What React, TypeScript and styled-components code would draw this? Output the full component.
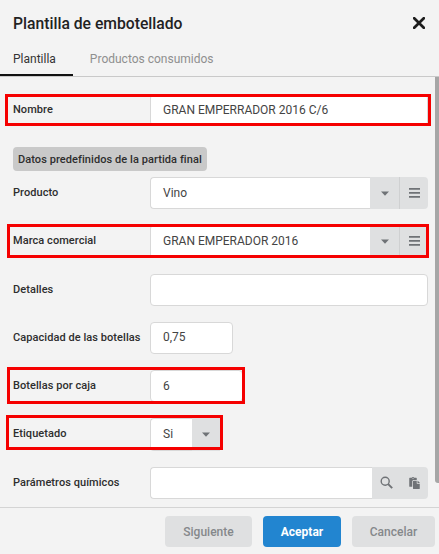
import React from "react";
import styled, { createGlobalStyle } from "styled-components";
import { FaPaste } from "react-icons/fa";

const Global = createGlobalStyle`
  html, body {
    margin: 0;
    padding: 0;
    background: #f3f3f3;
  }
  * {
    box-sizing: border-box;
  }
`;

const CaretIcon = () => (
  <svg width="8" height="5" viewBox="0 0 8 5">
    <path d="M0 0.4h8L4 4.8z" fill="#6f7276" />
  </svg>
);

const BarsIcon = () => (
  <svg width="11" height="10" viewBox="0 0 11 10">
    <path d="M0 0h11v1.7H0zM0 4h11v1.7H0zM0 8h11v1.7H0z" fill="#6f7276" />
  </svg>
);

const SearchIcon = () => (
  <svg width="13" height="13" viewBox="0 0 13 13" fill="none" stroke="#6f7276">
    <circle cx="5.2" cy="5.2" r="4" strokeWidth="1.4" />
    <path d="M8.2 8.2l4 4" strokeWidth="1.9" />
  </svg>
);

const CloseIcon = () => (
  <svg width="12" height="12" viewBox="0 0 12 12">
    <path d="M1.2 1.2l9.6 9.6M10.8 1.2l-9.6 9.6" stroke="#1c1c1c" strokeWidth="2.7" strokeLinecap="round" />
  </svg>
);

const App = () => {
  return (
    <Dialog>
      <Global />
      <Header>
        <Title>Plantilla de embotellado</Title>
        <CloseBtn>
          <CloseIcon />
        </CloseBtn>
      </Header>
      <Tabs>
        <Tab $active>Plantilla</Tab>
        <Tab>Productos consumidos</Tab>
      </Tabs>
      <Body>
        <Form>
          <Row>
            <Label>Nombre</Label>
            <Field>GRAN EMPERRADOR 2016 C/6</Field>
            <Mark $top={0} $left={5} $width={426} $height={32} />
          </Row>
          <Badge>Datos predefinidos de la partida final</Badge>
          <Row>
            <Label>Producto</Label>
            <Field $joined>Vino</Field>
            <Addon $width={29}>
              <CaretIcon />
            </Addon>
            <Addon $width={29} $last>
              <BarsIcon />
            </Addon>
          </Row>
          <Row>
            <Label>Marca comercial</Label>
            <Field $joined>GRAN EMPERADOR 2016</Field>
            <Addon $width={29}>
              <CaretIcon />
            </Addon>
            <Addon $width={29} $last>
              <BarsIcon />
            </Addon>
            <Mark $top={-1} $left={7} $width={422} $height={34} />
          </Row>
          <Row>
            <Label>Detalles</Label>
            <Field />
          </Row>
          <Row>
            <Label>Capacidad de las botellas</Label>
            <Field $width={83}>0,75</Field>
          </Row>
          <Row>
            <Label>Botellas por caja</Label>
            <Field $width={93}>6</Field>
            <Mark $top={-3} $left={7} $width={238} $height={37} />
          </Row>
          <Row>
            <Label>Etiquetado</Label>
            <Field $width={42} $joined>
              Si
            </Field>
            <Addon $width={28}>
              <CaretIcon />
            </Addon>
            <Mark $top={-3} $left={6} $width={217} $height={35} />
          </Row>
          <Row>
            <Label>Parámetros químicos</Label>
            <Field $joined />
            <Addon $width={28} $plain>
              <SearchIcon />
            </Addon>
            <Addon $width={28} $plain $last>
              <PasteIcon />
            </Addon>
          </Row>
        </Form>
        <Scrollbar />
      </Body>
      <Footer>
        <Button $width={87}>Siguiente</Button>
        <Button $width={78} $primary>
          Aceptar
        </Button>
        <Button $width={83}>Cancelar</Button>
      </Footer>
    </Dialog>
  );
};

const Dialog = styled.div`
  width: 439px;
  height: 554px;
  display: flex;
  flex-direction: column;
  overflow: hidden;
  background: #f3f3f3;
  font-family: Roboto, "Liberation Sans", sans-serif;
  color: #333;
`;

const Header = styled.div`
  height: 44px;
  padding: 12px 13px 0;
  display: flex;
  align-items: flex-start;
  justify-content: space-between;
`;

const Title = styled.div`
  font-size: 15.7px;
  font-weight: 500;
  line-height: 24px;
  color: #222;
`;

const CloseBtn = styled.div`
  display: flex;
  padding: 5px 1px 0 0;
`;

const Tabs = styled.div`
  height: 33px;
  display: flex;
  border-bottom: 1px solid #c9c9c9;
`;

const Tab = styled.div<{ $active?: boolean }>`
  height: 32px;
  padding: 7px 17px 0 13px;
  font-size: 12px;
  line-height: 16px;
  color: ${(p) => (p.$active ? "#333" : "#8f8f8f")};
  border-bottom: 2px solid ${(p) => (p.$active ? "#111" : "transparent")};
  & + & {
    padding-left: 17px;
  }
`;

const Body = styled.div`
  flex: 1;
  min-height: 0;
  display: flex;
  overflow: hidden;
  border-bottom: 1px solid #d4d4d4;
`;

const Form = styled.div`
  flex: 1;
  padding: 17px 7px 0 0;
  display: flex;
  flex-direction: column;
  gap: 16px;
`;

const Scrollbar = styled.div`
  width: 4px;
  height: 406px;
  background: #a6a6a6;
  border-bottom-left-radius: 3px;
`;

const Row = styled.div`
  position: relative;
  flex: none;
  height: 32.25px;
  display: flex;
  align-items: stretch;
  padding-left: 13px;
`;

const Label = styled.div`
  width: 137px;
  flex: none;
  display: flex;
  align-items: center;
  font-size: 11px;
  font-weight: 500;
  letter-spacing: 0.06px;
  color: #2e2e2e;
  white-space: nowrap;
  padding-bottom: 1px;
`;

const Field = styled.div<{ $width?: number; $joined?: boolean }>`
  ${(p) => (p.$width ? `width: ${p.$width}px; flex: none;` : "flex: 1;")}
  background: #fff;
  border: 1px solid #d8d8d8;
  border-radius: ${(p) => (p.$joined ? "4px 0 0 4px" : "4px")};
  ${(p) => (p.$joined ? "border-right: 0;" : "")}
  padding: 0 0 1px 12px;
  display: flex;
  align-items: center;
  font-size: 12px;
  color: #444;
  white-space: nowrap;
`;

const Addon = styled.div<{ $width: number; $last?: boolean; $plain?: boolean }>`
  width: ${(p) => p.$width}px;
  flex: none;
  display: flex;
  align-items: center;
  justify-content: center;
  background: #dfe0e1;
  border-radius: ${(p) => (p.$last ? "0 4px 4px 0" : "0")};
  ${(p) => (p.$last && !p.$plain ? "border-left: 1px solid #cfd0d1;" : "")}
`;

const PasteIcon = styled(FaPaste)`
  width: 11px;
  height: 12px;
  color: #6f7276;
`;

const Mark = styled.div<{ $top: number; $left: number; $width: number; $height: number }>`
  position: absolute;
  top: ${(p) => p.$top}px;
  left: ${(p) => p.$left}px;
  width: ${(p) => p.$width}px;
  height: ${(p) => p.$height}px;
  border: 3px solid #f50000;
  pointer-events: none;
`;

const Badge = styled.div`
  align-self: flex-start;
  margin: 4.75px 0 -10px 13px;
  height: 24px;
  padding: 0 5px;
  display: flex;
  align-items: center;
  background: #c9c9c9;
  border-radius: 4px;
  font-size: 11px;
  font-weight: 500;
  letter-spacing: 0.07px;
  color: #2e2e2e;
  white-space: nowrap;
`;

const Footer = styled.div`
  height: 46px;
  padding: 8px 4px 0 0;
  display: flex;
  justify-content: flex-end;
  align-items: flex-start;
  gap: 11px;
`;

const Button = styled.div<{ $width: number; $primary?: boolean }>`
  width: ${(p) => p.$width}px;
  height: 31px;
  display: flex;
  align-items: center;
  justify-content: center;
  border-radius: 4px;
  font-size: 12px;
  font-weight: ${(p) => (p.$primary ? 700 : 500)};
  background: ${(p) => (p.$primary ? "#2285d0" : "#dfe0e1")};
  color: ${(p) => (p.$primary ? "#fff" : "#85888b")};
`;

export default App;
